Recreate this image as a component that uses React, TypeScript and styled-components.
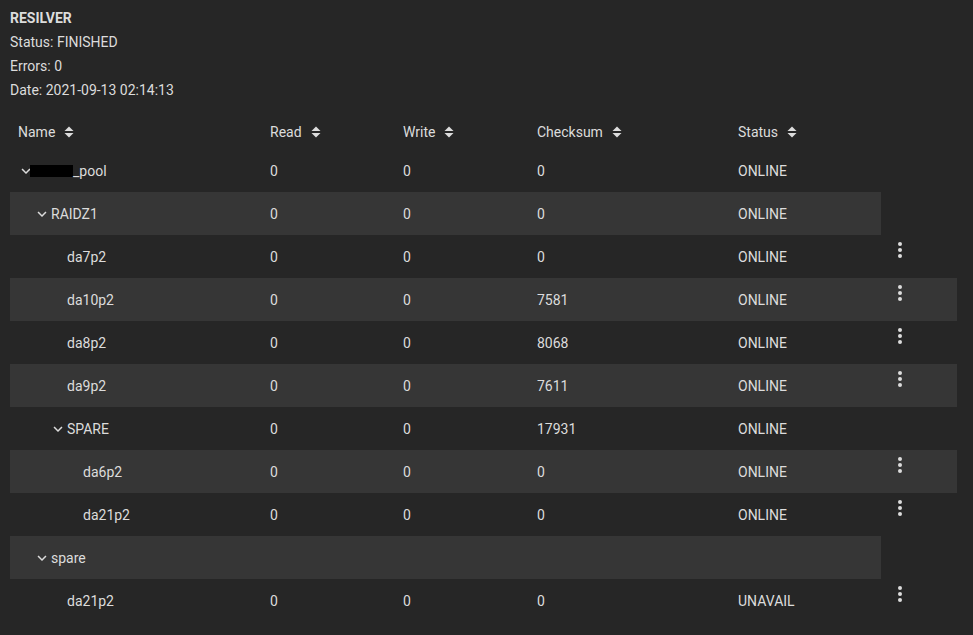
import { FC } from "react";
import styled, { createGlobalStyle } from "styled-components";

interface IRow {
    name: string,
    level: number,
    group: boolean,
    read: string,
    write: string,
    checksum: string,
    status: string,
    actions: boolean,
    redacted?: boolean
};

const rows: IRow[] = [
    { name: "_pool", level: 0, group: true, read: "0", write: "0", checksum: "0", status: "ONLINE", actions: false, redacted: true },
    { name: "RAIDZ1", level: 1, group: true, read: "0", write: "0", checksum: "0", status: "ONLINE", actions: false },
    { name: "da7p2", level: 2, group: false, read: "0", write: "0", checksum: "0", status: "ONLINE", actions: true },
    { name: "da10p2", level: 2, group: false, read: "0", write: "0", checksum: "7581", status: "ONLINE", actions: true },
    { name: "da8p2", level: 2, group: false, read: "0", write: "0", checksum: "8068", status: "ONLINE", actions: true },
    { name: "da9p2", level: 2, group: false, read: "0", write: "0", checksum: "7611", status: "ONLINE", actions: true },
    { name: "SPARE", level: 2, group: true, read: "0", write: "0", checksum: "17931", status: "ONLINE", actions: false },
    { name: "da6p2", level: 3, group: false, read: "0", write: "0", checksum: "0", status: "ONLINE", actions: true },
    { name: "da21p2", level: 3, group: false, read: "0", write: "0", checksum: "0", status: "ONLINE", actions: true },
    { name: "spare", level: 1, group: true, read: "", write: "", checksum: "", status: "", actions: false },
    { name: "da21p2", level: 2, group: false, read: "0", write: "0", checksum: "0", status: "UNAVAIL", actions: true }
];

const columns = ["Name", "Read", "Write", "Checksum", "Status"];

const GlobalStyle = createGlobalStyle`
    html, body {
        margin: 0;
        background: #262626;
        color: #dcdcdc;
        font-family: Roboto, "Liberation Sans", sans-serif;
        font-size: 14px;
    }
`;

const StyledPage = styled.div`
    height: 635px;
    overflow: hidden;
    padding: 6px 16px 0 10px;
`;

const StyledInfoLine = styled.div<{ $bold?: boolean }>`
    line-height: 24px;
    font-weight: ${p => p.$bold ? 700 : 400};
`;

const StyledGrid = styled.div`
    display: grid;
    grid-template-columns: 252px 133px 134px 201px 151px 76px;
    margin-top: 12px;
`;

const StyledHeaderCell = styled.div`
    height: 35px;
    display: flex;
    align-items: center;
    gap: 9px;
    padding-left: 8px;
`;

const StyledCell = styled.div<{ $striped: boolean }>`
    height: 43px;
    display: flex;
    align-items: center;
    padding-left: 8px;
    background: ${p => p.$striped ? "#363636" : "transparent"};
`;

const StyledNameCell = styled(StyledCell)<{ $level: number }>`
    padding-left: ${p => 7 + p.$level * 16}px;
`;

const StyledActionCell = styled.div<{ $striped: boolean }>`
    height: 43px;
    display: flex;
    align-items: flex-start;
    padding: 3px 0 0 7px;
    box-sizing: border-box;
    background: ${p => p.$striped ? "#363636" : "transparent"};
`;

const StyledIconBox = styled.span`
    width: 18px;
    height: 18px;
    display: inline-flex;
    flex: none;
`;

const StyledRedacted = styled.span`
    display: inline-block;
    width: 43px;
    height: 12px;
    background: #000;
    margin-left: -5px;
`;

const SortIcon: FC = () => (
    <svg width="10" height="12" viewBox="0 0 10 12" fill="#dcdcdc">
        <path d="M5 0.5L9.5 5H0.5z" />
        <path d="M5 11.5L0.5 7H9.5z" />
    </svg>
);

const Chevron: FC = () => (
    <StyledIconBox>
        <svg width="18" height="18" viewBox="0 0 24 24" fill="#dcdcdc">
            <path d="M7.41 8.59L12 13.17l4.59-4.58L18 10l-6 6-6-6 1.41-1.41z" />
        </svg>
    </StyledIconBox>
);

const MoreIcon: FC = () => (
    <svg width="24" height="24" viewBox="0 0 24 24" fill="#dcdcdc">
        <circle cx="12" cy="6" r="2" />
        <circle cx="12" cy="12" r="2" />
        <circle cx="12" cy="18" r="2" />
    </svg>
);

export default function App() {
    return (
        <StyledPage>
            <GlobalStyle />
            <StyledInfoLine $bold>RESILVER</StyledInfoLine>
            <StyledInfoLine>Status: FINISHED</StyledInfoLine>
            <StyledInfoLine>Errors: 0</StyledInfoLine>
            <StyledInfoLine>Date: 2021-09-13 02:14:13</StyledInfoLine>
            <StyledGrid>
                {columns.map(col => (
                    <StyledHeaderCell key={col}>
                        {col}
                        <SortIcon />
                    </StyledHeaderCell>
                ))}
                <div />
                {rows.map((row, i) => {
                    const striped = i % 2 === 1;
                    return [
                        <StyledNameCell key={`n${i}`} $striped={striped} $level={row.level}>
                            {row.group ? <Chevron /> : <StyledIconBox />}
                            {row.redacted && <StyledRedacted />}
                            {row.name}
                        </StyledNameCell>,
                        <StyledCell key={`r${i}`} $striped={striped}>{row.read}</StyledCell>,
                        <StyledCell key={`w${i}`} $striped={striped}>{row.write}</StyledCell>,
                        <StyledCell key={`c${i}`} $striped={striped}>{row.checksum}</StyledCell>,
                        <StyledCell key={`s${i}`} $striped={striped}>{row.status}</StyledCell>,
                        <StyledActionCell key={`a${i}`} $striped={striped && row.actions}>
                            {row.actions && <MoreIcon />}
                        </StyledActionCell>
                    ];
                })}
            </StyledGrid>
        </StyledPage>
    );
}
